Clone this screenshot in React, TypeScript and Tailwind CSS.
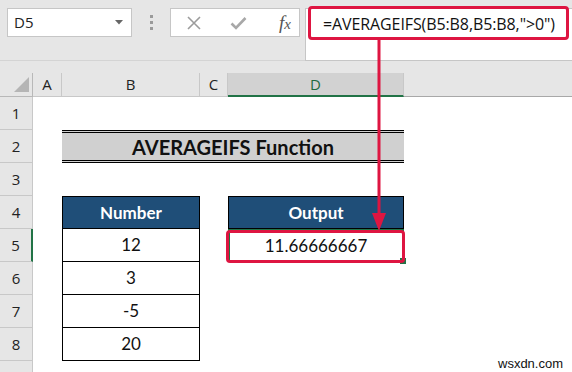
import React from "react";

const cal = "font-['Lato','Liberation_Sans',sans-serif]";
const ui = "font-['Open_Sans','Noto_Sans',sans-serif]";

const rowHdr = "flex items-center justify-center border-b border-r border-[#c8c8c8] bg-[#e6e6e6] text-[15px] text-[#222]";

function RowHead({ n, active }: { n?: number; active?: boolean }) {
  return (
    <div
      className={
        active
          ? `${rowHdr} ${ui} bg-[#d2d2d2] border-r-2 border-r-[#217346] text-[#1e6b3f]`
          : `${rowHdr} ${ui}`
      }
    >
      {n}
    </div>
  );
}

export default function App() {
  const nums = ["12", "3", "-5", "20"];

  return (
    <div className="relative h-[372px] w-[572px] overflow-hidden bg-white">
      {/* formula bar */}
      <div className="flex h-[61px] items-start gap-0 border-b border-[#d4d4d4] bg-[#e6e6e6] pl-[7px] pt-2">
        <div className={`flex h-[29px] w-[125px] items-center justify-between border border-[#c6c6c6] bg-white pl-[6px] pr-[8px] text-[15px] text-[#222] ${ui}`}>
          <span>D5</span>
          <svg width="8" height="5" viewBox="0 0 8 5">
            <path d="M0 0h8L4 4.5z" fill="#666" />
          </svg>
        </div>
        <div className="flex h-[29px] w-[38px] flex-col items-center justify-center gap-[3px]">
          <span className="size-[3px] bg-[#9a9a9a]" />
          <span className="size-[3px] bg-[#9a9a9a]" />
          <span className="size-[3px] bg-[#9a9a9a]" />
        </div>
        <div className="flex h-[29px] w-[130px] items-center border border-[#c6c6c6] bg-white">
          <svg className="ml-[15px]" width="16" height="16" viewBox="0 0 16 16">
            <path d="M2 2l12 12M14 2L2 14" stroke="#9c9c9c" strokeWidth="1.6" />
          </svg>
          <svg className="ml-[28px]" width="17" height="14" viewBox="0 0 17 14">
            <path d="M1.5 7.5l4.5 4.5L15.5 2" stroke="#a8a8a8" strokeWidth="2.6" fill="none" />
          </svg>
          <span className="ml-[32px] font-['Liberation_Serif',serif] text-[19px] italic leading-none text-[#555]">
            f<span className="text-[15px]">x</span>
          </span>
        </div>
        <div className={`ml-[5px] h-[53px] flex-1 border border-[#c6c6c6] border-r-0 bg-white pl-[17px] pt-[3px] text-[16px] tracking-[-0.1px] text-[#111] ${ui}`}>
          =AVERAGEIFS(B5:B8,B5:B8,"&gt;0")
        </div>
      </div>

      {/* sheet */}
      <div className="h-[12px] bg-[#e6e6e6]" />
      <div className="grid grid-cols-[33px_29px_138px_28px_176px_1fr] grid-rows-[24px_repeat(9,33px)]">
        {/* header row */}
        <div className="relative border-b border-r border-[#b8b8b8] bg-[#e6e6e6]">
          <svg className="absolute bottom-[4px] right-[3px]" width="15" height="15" viewBox="0 0 15 15">
            <path d="M15 0V15H0z" fill="#b5b5b5" />
          </svg>
        </div>
        {["A", "B", "C"].map((c) => (
          <div key={c} className={`flex items-center justify-center border-b border-r border-[#c8c8c8] bg-[#e6e6e6] text-[15px] text-[#222] ${ui}`}>
            {c}
          </div>
        ))}
        <div className={`flex items-center justify-center border-b-2 border-r border-b-[#217346] border-r-[#c8c8c8] bg-[#d2d2d2] text-[15px] text-[#1e6b3f] ${ui}`}>
          D
        </div>
        <div className="border-b border-[#a8a8a8] bg-[#e6e6e6]" />

        {/* row 1 */}
        <RowHead n={1} />
        <div className="col-span-5" />

        {/* row 2 */}
        <RowHead n={2} />
        <div />
        <div className={`col-span-3 flex items-center justify-center border-y-[3px] border-double border-black bg-[#d0d0d0] text-[20px] font-bold text-[#111] ${cal}`}>
          AVERAGEIFS Function
        </div>
        <div />

        {/* row 3 */}
        <RowHead n={3} />
        <div className="col-span-5" />

        {/* row 4 */}
        <RowHead n={4} />
        <div />
        <div className={`flex items-center justify-center border border-black bg-[#1f4e78] text-[17px] font-bold text-white ${cal}`}>
          Number
        </div>
        <div />
        <div className={`flex items-center justify-center border border-black bg-[#1f4e78] text-[17px] font-bold text-white ${cal}`}>
          Output
        </div>
        <div />

        {/* rows 5-8 */}
        {nums.map((v, i) => (
          <React.Fragment key={v}>
            <RowHead n={5 + i} active={i === 0} />
            <div />
            <div className={`flex items-center justify-center border-x border-b border-black text-[17px] text-[#111] ${cal}`}>
              {v}
            </div>
            <div />
            {i === 0 ? (
              <div className={`relative flex items-center justify-center border-2 border-[#217346] text-[17px] text-[#111] ${cal}`}>
                11.66666667
                <span className="absolute -bottom-[4px] -right-[4px] size-[6px] bg-[#217346]" />
              </div>
            ) : (
              <div />
            )}
            <div />
          </React.Fragment>
        ))}

        {/* row 9, cut off by the window */}
        <RowHead />
        <div className="col-span-5" />
      </div>

      {/* callouts */}
      <div className="absolute left-[308px] top-[6px] h-[34px] w-[261px] rounded-[4px] border-[3px] border-[#de1541]" />
      <div className="absolute left-[226px] top-[230px] h-[33px] w-[179px] rounded-[4px] border-[3px] border-[#de1541]" />
      <svg className="absolute left-[370px] top-[39px]" width="18" height="193" viewBox="0 0 18 193">
        <path d="M9 0V178" stroke="#de1541" strokeWidth="3" />
        <path d="M2 174H16L9 192z" fill="#de1541" />
      </svg>

      <div className="absolute left-[498px] top-[354px] font-['Liberation_Sans',sans-serif] text-[13px] text-[#111]">
        wsxdn.com
      </div>
    </div>
  );
}
